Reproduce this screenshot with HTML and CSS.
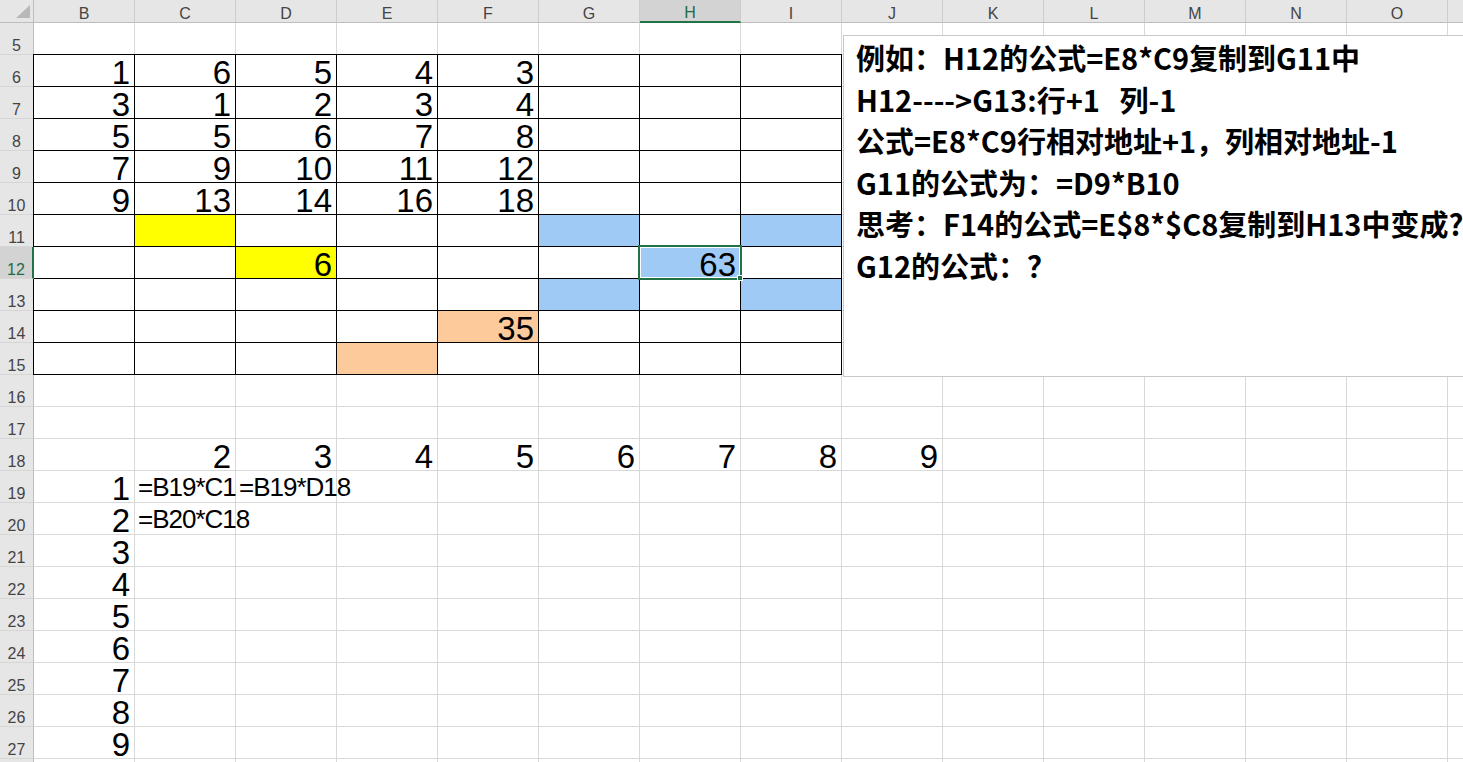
FILE: index.html
```html
<!DOCTYPE html>
<html lang="zh-CN">
<head>
<meta charset="utf-8">
<title>Sheet</title>
<link rel="stylesheet" href="styles.css">
</head>
<body>
<div class="app">
  <div class="corner">
    <svg class="tri" width="34" height="23" viewBox="0 0 34 23"><polygon points="16,18 30,18 30,5" fill="#b8b8b8"/></svg>
  </div>
  <div class="colhead">
    <div class="ch">B</div><div class="ch">C</div><div class="ch">D</div><div class="ch">E</div><div class="ch">F</div><div class="ch">G</div><div class="ch sel">H</div><div class="ch">I</div><div class="ch">J</div><div class="ch">K</div><div class="ch">L</div><div class="ch">M</div><div class="ch">N</div><div class="ch">O</div><div class="ch">P</div>
  </div>
  <div class="rowhead">
    <div class="rh">5</div><div class="rh">6</div><div class="rh">7</div><div class="rh">8</div><div class="rh">9</div><div class="rh">10</div><div class="rh">11</div><div class="rh sel">12</div><div class="rh">13</div><div class="rh">14</div><div class="rh">15</div><div class="rh">16</div><div class="rh">17</div><div class="rh">18</div><div class="rh">19</div><div class="rh">20</div><div class="rh">21</div><div class="rh">22</div><div class="rh">23</div><div class="rh">24</div><div class="rh">25</div><div class="rh">26</div><div class="rh">27</div><div class="rh">28</div>
  </div>
  <div class="sheet">
    <div class="tbl">
      <div class="c">1</div><div class="c">6</div><div class="c">5</div><div class="c">4</div><div class="c">3</div><div class="c"></div><div class="c"></div><div class="c"></div>
      <div class="c">3</div><div class="c">1</div><div class="c">2</div><div class="c">3</div><div class="c">4</div><div class="c"></div><div class="c"></div><div class="c"></div>
      <div class="c">5</div><div class="c">5</div><div class="c">6</div><div class="c">7</div><div class="c">8</div><div class="c"></div><div class="c"></div><div class="c"></div>
      <div class="c">7</div><div class="c">9</div><div class="c">10</div><div class="c">11</div><div class="c">12</div><div class="c"></div><div class="c"></div><div class="c"></div>
      <div class="c">9</div><div class="c">13</div><div class="c">14</div><div class="c">16</div><div class="c">18</div><div class="c"></div><div class="c"></div><div class="c"></div>
      <div class="c"></div><div class="c y"></div><div class="c"></div><div class="c"></div><div class="c"></div><div class="c b"></div><div class="c"></div><div class="c b"></div>
      <div class="c"></div><div class="c"></div><div class="c y">6</div><div class="c"></div><div class="c"></div><div class="c"></div><div class="c b sel">63</div><div class="c"></div>
      <div class="c"></div><div class="c"></div><div class="c"></div><div class="c"></div><div class="c"></div><div class="c b"></div><div class="c"></div><div class="c b"></div>
      <div class="c"></div><div class="c"></div><div class="c"></div><div class="c"></div><div class="c o">35</div><div class="c"></div><div class="c"></div><div class="c"></div>
      <div class="c"></div><div class="c"></div><div class="c"></div><div class="c o"></div><div class="c"></div><div class="c"></div><div class="c"></div><div class="c"></div>
    </div>

    <div class="row18">
      <div class="n">2</div><div class="n">3</div><div class="n">4</div><div class="n">5</div><div class="n">6</div><div class="n">7</div><div class="n">8</div><div class="n">9</div>
    </div>

    <div class="colb">
      <div class="n">1</div><div class="n">2</div><div class="n">3</div><div class="n">4</div><div class="n">5</div><div class="n">6</div><div class="n">7</div><div class="n">8</div><div class="n">9</div>
    </div>

    <div class="f c19 clip">=B19*C18</div>
    <div class="f d19">=B19*D18</div>
    <div class="f c20">=B20*C18</div>

    <div class="note">
      <div class="ln">例如：H12的公式=E8*C9复制到G11中</div>
      <div class="ln">H12----&gt;G13:行+1   列-1</div>
      <div class="ln">公式=E8*C9行相对地址+1，列相对地址-1</div>
      <div class="ln">G11的公式为：=D9*B10</div>
      <div class="ln">思考：F14的公式=E$8*$C8复制到H13中变成?</div>
      <div class="ln">G12的公式：？</div>
    </div>
  </div>
</div>
</body>
</html>
```
FILE: styles.css
```css
html, body {
  margin: 0;
  padding: 0;
  background: #fff;
  overflow: hidden;
}

.app {
  width: 1463px;
  height: 762px;
  overflow: hidden;
  display: grid;
  grid-template-columns: 34px 1fr;
  grid-template-rows: 23px 1fr;
  font-family: "Liberation Sans", Arial, sans-serif;
  color: #000;
}

.corner {
  background: #e6e6e6;
  border-right: 1px solid #bdbdbd;
  border-bottom: 1px solid #bdbdbd;
  box-sizing: border-box;
  position: relative;
}

.tri {
  display: block;
}

.colhead {
  display: flex;
  background: #e6e6e6;
  overflow: hidden;
}

.ch {
  flex: none;
  width: 101px;
  height: 23px;
  box-sizing: border-box;
  border-right: 1px solid #cdcdcd;
  border-bottom: 1px solid #bdbdbd;
  display: flex;
  align-items: flex-end;
  justify-content: center;
  font-size: 16px;
  line-height: 16px;
  color: #444;
}

.ch.sel {
  background: #d3d3d3;
  color: #1f6b45;
  border-bottom: 2px solid #217346;
}

.rowhead {
  display: flex;
  flex-direction: column;
  background: #e6e6e6;
  overflow: hidden;
}

.rh {
  flex: none;
  height: 32px;
  box-sizing: border-box;
  border-right: 1px solid #bdbdbd;
  border-bottom: 1px solid #d6d6d6;
  display: flex;
  align-items: flex-end;
  justify-content: center;
  font-size: 16px;
  line-height: 16px;
  color: #444;
}

.rh.sel {
  background: #d3d3d3;
  color: #1f6b45;
  border-right: 2px solid #217346;
  position: relative;
  z-index: 2;
}

.sheet {
  position: relative;
  display: grid;
  grid-template-columns: repeat(16, 101px);
  grid-template-rows: repeat(24, 32px);
  background-image:
    linear-gradient(to right, transparent 100px, #d9d9d9 100px),
    linear-gradient(to bottom, transparent 31px, #d9d9d9 31px);
  background-size: 101px 100%, 100% 32px;
}

.tbl {
  grid-column: 1 / 9;
  grid-row: 2 / 12;
  margin: -1px 0 0 -1px;
  border: 1px solid #000;
  background: #000;
  display: grid;
  grid-template-columns: repeat(8, 100px);
  grid-template-rows: repeat(10, 31px);
  gap: 1px;
}

.c {
  background: #fff;
  display: flex;
  align-items: flex-end;
  justify-content: flex-end;
  padding-right: 4px;
  font-size: 33px;
  line-height: 26px;
}

.c.y { background: #ffff00; }
.c.b { background: #9fcaf6; }
.c.o { background: #fdca9b; }

.c.sel {
  position: relative;
}

.c.sel::after {
  content: "";
  position: absolute;
  left: -2px;
  top: -2px;
  right: -2px;
  bottom: -2px;
  border: 2px solid #217346;
  box-shadow: inset 0 0 0 1px #fff;
  z-index: 1;
}

.c.sel::before {
  content: "";
  position: absolute;
  right: -3px;
  bottom: -3px;
  width: 4px;
  height: 4px;
  background: #217346;
  border: 1px solid #fff;
  z-index: 2;
}

.row18 {
  grid-column: 2 / 10;
  grid-row: 14;
  display: grid;
  grid-template-columns: repeat(8, 101px);
}

.colb {
  grid-column: 1;
  grid-row: 15 / 24;
  display: grid;
  grid-template-rows: repeat(9, 32px);
}

.n {
  display: flex;
  align-items: flex-end;
  justify-content: flex-end;
  padding: 0 5px 1px 0;
  font-size: 33px;
  line-height: 26px;
}

.f {
  display: flex;
  align-items: flex-end;
  padding: 0 0 1px 3px;
  font-size: 26px;
  line-height: 29px;
  letter-spacing: -1px;
  white-space: nowrap;
}

.f.clip { overflow: hidden; }
.c19 { grid-column: 2; grid-row: 15; }
.d19 { grid-column: 3; grid-row: 15; }
.c20 { grid-column: 2; grid-row: 16; }

.note {
  position: absolute;
  left: 809px;
  top: 12px;
  width: 700px;
  height: 339px;
  border: 1px solid #c8c8c8;
  background: #fff;
  padding: 1px 0 0 12px;
  font-family: "Noto Sans CJK SC", "Noto Sans", sans-serif;
  font-weight: 700;
  font-size: 29px;
  line-height: 41.5px;
  color: #000;
  z-index: 3;
}

.ln {
  white-space: pre;
}
```
